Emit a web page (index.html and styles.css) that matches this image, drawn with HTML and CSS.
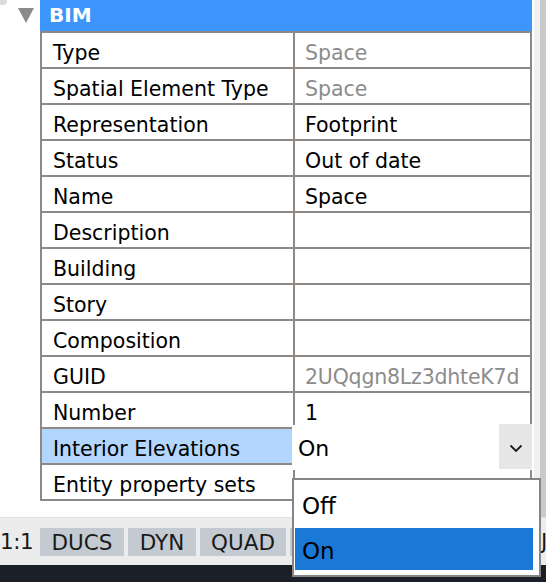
FILE: index.html
```html
<!DOCTYPE html>
<html>
<head>
<meta charset="utf-8">
<link rel="stylesheet" href="styles.css">
</head>
<body>
<div class="main">
  <div class="gutter">
    <div class="corner"></div>
    <div class="tri"></div>
  </div>
  <div class="panel">
    <div class="header">BIM</div>
    <div class="grid">
      <div class="cell">Type</div><div class="cell val dim">Space</div>
      <div class="cell">Spatial Element Type</div><div class="cell val dim">Space</div>
      <div class="cell">Representation</div><div class="cell val">Footprint</div>
      <div class="cell">Status</div><div class="cell val">Out of date</div>
      <div class="cell">Name</div><div class="cell val">Space</div>
      <div class="cell">Description</div><div class="cell val"></div>
      <div class="cell">Building</div><div class="cell val"></div>
      <div class="cell">Story</div><div class="cell val"></div>
      <div class="cell">Composition</div><div class="cell val"></div>
      <div class="cell">GUID</div><div class="cell val dim guid">2UQqgn8Lz3dhteK7d</div>
      <div class="cell">Number</div><div class="cell val">1</div>
      <div class="cell sel">Interior Elevations</div>
      <div class="cell val editing">
        <div class="editor">
          <span class="editor-text">On</span>
          <span class="editor-btn">
            <svg width="14" height="9" viewBox="0 0 14 9"><path d="M1.5 1.5 L7 7 L12.5 1.5" fill="none" stroke="#1a1a1a" stroke-width="1.8"/></svg>
          </span>
        </div>
      </div>
      <div class="cell">Entity property sets</div><div class="cell val"></div>
    </div>
  </div>
  <div class="strip">
    <div class="s1"></div><div class="s2"></div><div class="s3"></div>
  </div>
</div>
<div class="status">
  <span class="scale">1:1</span>
  <span class="sbtn w1">DUCS</span>
  <span class="sbtn w2">DYN</span>
  <span class="sbtn w3">QUAD</span>
  <span class="sbtn w4">SC</span>
  <span class="stext">J</span>
</div>
<div class="dock"></div>
<div class="popup">
  <div class="opt">Off</div>
  <div class="opt chosen">On</div>
</div>
</body>
</html>
```

FILE: styles.css
```css
html, body {
  margin: 0;
  padding: 0;
  background: #ffffff;
  width: 546px;
  height: 582px;
  overflow: hidden;
  font-family: "DejaVu Sans", "Liberation Sans", sans-serif;
  font-size: 20.5px;
  color: #000;
}
body { position: relative; }

.main {
  display: flex;
  height: 517px;
}

.gutter {
  width: 40px;
  flex: none;
}
.corner {
  width: 7px;
  height: 5px;
  background: #dcdcdc;
  border-bottom-right-radius: 4px;
}
.tri {
  margin: 3px 0 0 18px;
  width: 0;
  height: 0;
  border-left: 8.5px solid transparent;
  border-right: 8.5px solid transparent;
  border-top: 15px solid #8a8a8a;
}

.panel {
  width: 492px;
  flex: none;
}
.header {
  height: 31px;
  background: #3c95fa;
  color: #fff;
  font-weight: bold;
  font-size: 20px;
  line-height: 31px;
  padding-left: 9px;
  box-sizing: border-box;
}
.grid {
  display: grid;
  grid-template-columns: 251px 235px;
  grid-auto-rows: 34px;
  gap: 2px;
  padding: 2px;
  background: #8e8984;
}
.cell {
  background: #fff;
  line-height: 40px;
  padding-left: 11px;
  white-space: nowrap;
  overflow: hidden;
}
.cell.val { padding-left: 10px; }
.cell.dim { color: #8c8c8c; }
.cell.guid { letter-spacing: -0.2px; }
.cell.sel { background: #b3d6fe; }
.cell.editing {
  position: relative;
  overflow: visible;
}
.editor {
  position: absolute;
  left: -3px;
  right: -2px;
  top: -4px;
  height: 45px;
  background: #fff;
  display: flex;
  align-items: center;
  justify-content: space-between;
  z-index: 2;
}
.editor-text {
  padding-left: 6px;
  font-size: 22px;
  padding-top: 2px;
}
.editor-btn {
  width: 33px;
  height: 45px;
  background: #e6e6e6;
  display: flex;
  align-items: center;
  justify-content: center;
  margin-top: -2px;
}
.editor-btn svg { margin-top: 4px; }

.strip {
  display: flex;
  flex: none;
  width: 14px;
}
.s1 { width: 2px; background: #fff; }
.s2 { width: 6px; background: #f0f0f0; }
.s3 { width: 6px; background: #c9c9c9; }

.status {
  height: 48px;
  background: #ececec;
  border-top: 1px solid #dedede;
  box-sizing: border-box;
  display: flex;
  align-items: center;
  white-space: nowrap;
  overflow: hidden;
  font-size: 21.5px;
  color: #1a1a1a;
}
.scale {
  width: 40px;
  flex: none;
  letter-spacing: -0.5px;
}
.sbtn {
  flex: none;
  height: 28px;
  line-height: 30px;
  background: #c4cad2;
  text-align: center;
  margin-right: 4px;
}
.w1 { width: 84px; }
.w2 { width: 68px; }
.w3 { width: 86px; }
.w4 { width: 240px; margin-right: 11px; }
.stext { flex: none; }

.dock {
  height: 17px;
  background: #1b1f28;
}

.popup {
  position: absolute;
  left: 292px;
  top: 478px;
  width: 249px;
  height: 99px;
  box-sizing: border-box;
  border: 2px solid #858585;
  background: #fff;
  padding: 0 6px 0 1px;
  z-index: 5;
}
.opt {
  height: 48px;
  line-height: 52px;
  padding-left: 7px;
  font-size: 23px;
}
.opt.chosen {
  height: 42px;
  line-height: 46px;
  background: #1a78d6;
  color: #000;
}
```
